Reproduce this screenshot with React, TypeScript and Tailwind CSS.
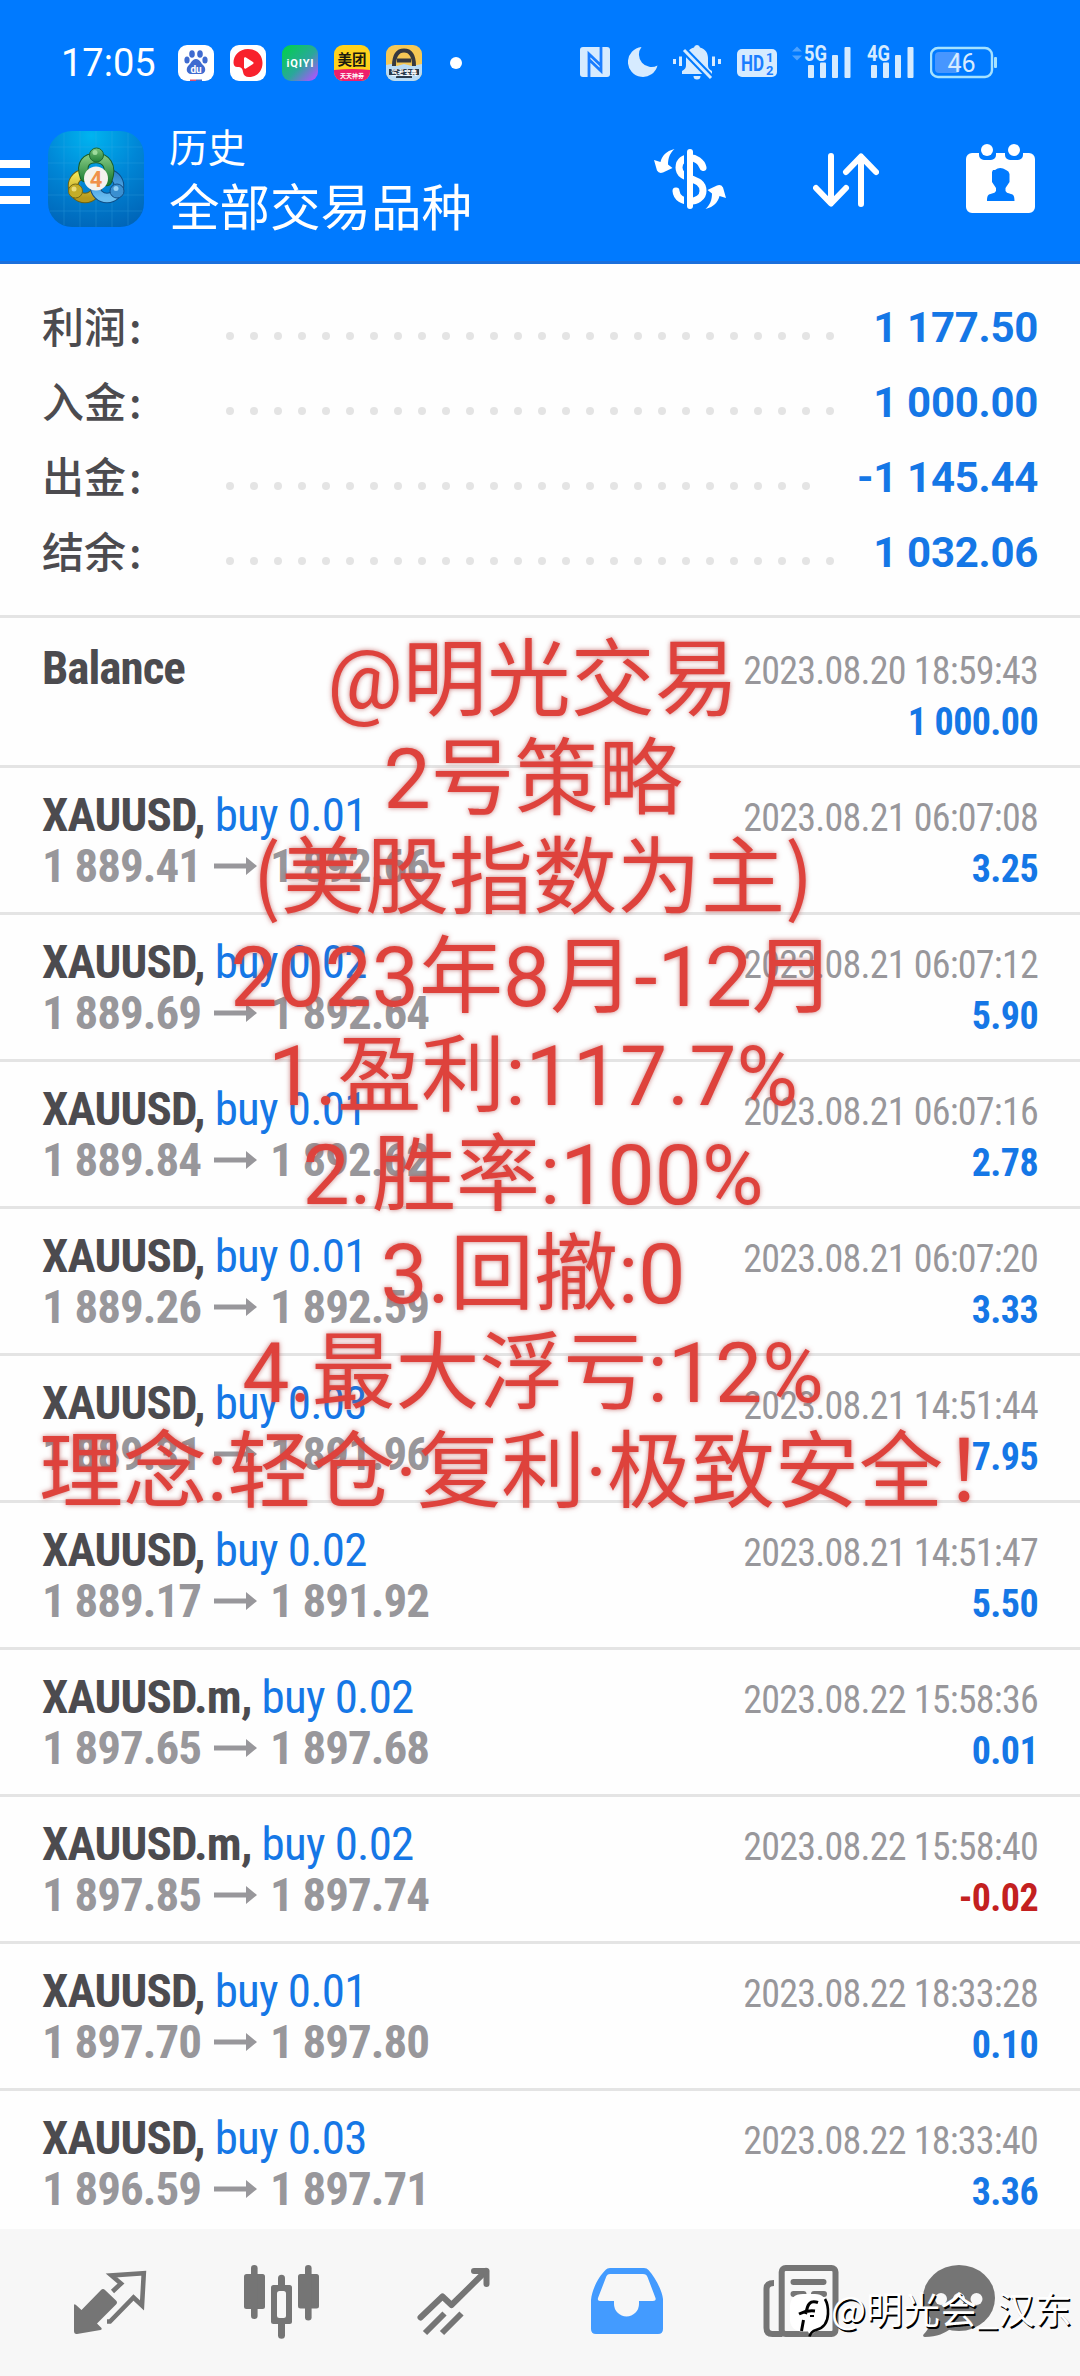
import { clsx } from 'clsx';

const summary = [
  { label: '利润', value: '1 177.50', dots: 26 },
  { label: '入金', value: '1 000.00', dots: 26 },
  { label: '出金', value: '-1 145.44', dots: 25 },
  { label: '结余', value: '1 032.06', dots: 26 },
];

const deals = [
  { symbol: 'XAUUSD', volume: '0.01', open: '1 889.41', close: '1 892.66', time: '2023.08.21 06:07:08', profit: '3.25' },
  { symbol: 'XAUUSD', volume: '0.02', open: '1 889.69', close: '1 892.64', time: '2023.08.21 06:07:12', profit: '5.90' },
  { symbol: 'XAUUSD', volume: '0.01', open: '1 889.84', close: '1 892.62', time: '2023.08.21 06:07:16', profit: '2.78' },
  { symbol: 'XAUUSD', volume: '0.01', open: '1 889.26', close: '1 892.59', time: '2023.08.21 06:07:20', profit: '3.33' },
  { symbol: 'XAUUSD', volume: '0.03', open: '1 889.31', close: '1 891.96', time: '2023.08.21 14:51:44', profit: '7.95' },
  { symbol: 'XAUUSD', volume: '0.02', open: '1 889.17', close: '1 891.92', time: '2023.08.21 14:51:47', profit: '5.50' },
  { symbol: 'XAUUSD.m', volume: '0.02', open: '1 897.65', close: '1 897.68', time: '2023.08.22 15:58:36', profit: '0.01' },
  { symbol: 'XAUUSD.m', volume: '0.02', open: '1 897.85', close: '1 897.74', time: '2023.08.22 15:58:40', profit: '-0.02' },
  { symbol: 'XAUUSD', volume: '0.01', open: '1 897.70', close: '1 897.80', time: '2023.08.22 18:33:28', profit: '0.10' },
  { symbol: 'XAUUSD', volume: '0.03', open: '1 896.59', close: '1 897.71', time: '2023.08.22 18:33:40', profit: '3.36' },
];

const notes = [
  '@明光交易',
  '2号策略',
  '(美股指数为主)',
  '2023年8月-12月',
  '1.盈利:117.7%',
  '2.胜率:100%',
  '3.回撤:0',
  '4.最大浮亏:12%',
  '理念:轻仓·复利·极致安全！',
];

function NotificationIcons() {
  return (
    <div className="flex items-center gap-4">
      <svg className="size-9" viewBox="0 0 36 36">
        <rect width="36" height="36" rx="9" fill="#fff" />
        <g fill="#3f6bd0">
          <ellipse cx="14" cy="9" rx="2.8" ry="3.8" />
          <ellipse cx="22" cy="9" rx="2.8" ry="3.8" />
          <ellipse cx="9" cy="15" rx="2.6" ry="3.5" />
          <ellipse cx="27" cy="15" rx="2.6" ry="3.5" />
          <path d="M18 14c-4 0-4.500 4-7.500 6.500C7.500 23.500 8.500 29 13 29h10c4.500 0 5.500-5.500 2.500-8.500C22.500 18 22 14 18 14z" />
        </g>
        <text x="18" y="27.500" fontSize="10" fontWeight="700" fill="#fff" textAnchor="middle">du</text>
        <rect x="12" y="34.500" width="6" height="1.500" fill="#e0506a" />
        <rect x="18" y="34.500" width="6" height="1.500" fill="#3f6bd0" />
      </svg>
      <svg className="size-9" viewBox="0 0 36 36">
        <rect width="36" height="36" rx="9" fill="#fff" />
        <path d="M18 4C9 4 3.500 10.500 3.500 17.500c0 2.500 1 4.500 4 4.500 4 0 5 1.500 5.500 5 .5 3.500 2.500 5 6 5C27 32 32.500 26 32.500 18S26.500 4 18 4z" fill="#f8212c" />
        <path d="M14 13.500v9c0 1 1 1.500 2 1l7-4.500c.8-.6.8-1.500 0-2l-7-4.500c-1-.5-2 0-2 1z" fill="#fff" />
      </svg>
      <svg className="size-9" viewBox="0 0 36 36">
        <defs>
          <linearGradient id="qy" x1="0" y1="0" x2="1" y2="1">
            <stop offset="0.1" stopColor="#06cc55" />
            <stop offset="0.55" stopColor="#2aa79b" />
            <stop offset="0.9" stopColor="#a15cf5" />
          </linearGradient>
        </defs>
        <rect width="36" height="36" rx="9" fill="url(#qy)" />
        <text x="18" y="22" fontSize="11" fontWeight="700" fill="#fff" textAnchor="middle" textLength="27">iQIYI</text>
      </svg>
      <svg className="size-9" viewBox="0 0 36 36">
        <defs>
          <clipPath id="mt"><rect width="36" height="36" rx="9" /></clipPath>
        </defs>
        <g clipPath="url(#mt)">
          <rect width="36" height="36" fill="#ffd21c" />
          <path d="M0 25q18-2 36 0v11H0z" fill="#ee1f6c" />
        </g>
        <text x="18" y="19.500" fontSize="14.500" fontWeight="700" fill="#1c1a10" textAnchor="middle">美团</text>
        <text x="18" y="32.500" fontSize="6" fontWeight="700" fill="#fff" textAnchor="middle">天天神券</text>
      </svg>
      <svg className="size-9" viewBox="0 0 36 36">
        <defs>
          <clipPath id="dr"><rect width="36" height="36" rx="9" /></clipPath>
        </defs>
        <g clipPath="url(#dr)">
          <rect width="36" height="36" fill="#f5c855" />
          <path d="M0 20l5-1 6 2 7-2 8 2 10-2v17H0z" fill="#b9dcf6" />
          <path d="M8 21C8 10 12 5.500 18 5.500S28 10 28 21M11 15.500h14" fill="none" stroke="#36393f" strokeWidth="4" />
          <rect x="3" y="24" width="30" height="6" fill="#2b3b4c" />
          <rect x="10" y="31" width="16" height="2" fill="#2b3b4c" />
        </g>
        <text x="18" y="29.500" fontSize="6.500" fontWeight="700" fill="#fff" textAnchor="middle">驾考宝典</text>
      </svg>
    </div>
  );
}

function SignalIcon({ label, className }: { label: string; className?: string }) {
  return (
    <svg className={clsx('h-[34px] w-[48px] overflow-visible', className)} viewBox="0 0 48 34" fill="#d6ebff">
      <text x="0" y="16" fontSize="22" fontWeight="700" textLength="23" lengthAdjust="spacingAndGlyphs">{label}</text>
      <rect x="4" y="20" width="6" height="13" rx="1" />
      <rect x="16" y="17.500" width="6" height="15.500" rx="1" />
      <rect x="28" y="10" width="6" height="23" rx="1" />
      <rect x="40.500" y="2" width="6" height="31" rx="1" />
    </svg>
  );
}

function StatusBar() {
  return (
    <div className="flex h-24 items-start px-[61px] pt-[45px] font-['Roboto','Noto_Sans_CJK_SC',sans-serif] text-[#d6ebff]">
      <span className="w-[117px] text-[38px] leading-9 text-white">17:05</span>
      <NotificationIcons />
      <span className="mt-3 ml-[28px] size-3 rounded-full bg-white" />
      <svg className="ml-[118px] h-[34px] w-[30px]" viewBox="0 0 30 34">
        <rect y="2" width="30" height="30" rx="3" fill="#d6ebff" />
        <path d="M9 32V9l12 11.500M21 2v24L9 14.500" fill="none" stroke="#1a7dff" strokeWidth="2.800" />
      </svg>
      <svg className="ml-[18px] h-[34px] w-[30px]" viewBox="0 0 30 34" fill="#d6ebff">
        <path d="M13.500 2A15 15 0 1 0 29.500 20.500 12.500 12.500 0 0 1 13.500 2z" />
      </svg>
      <svg className="ml-[15px] h-[36px] w-[48px]" viewBox="0 0 48 36" fill="#d6ebff">
        <path d="M24 0a3 3 0 0 0-3 2.500C15 4 13 9 13 13v7c0 3-1 4-4 6v3h30v-3c-3-2-4-3-4-6v-7c0-4-2-9-8-10.500A3 3 0 0 0 24 0z" />
        <path d="M20.500 31h7a3.500 3.500 0 0 1-7 0z" />
        <path d="M9 3l30 31" stroke="#007aff" strokeWidth="7" />
        <path d="M11 5l27 28" stroke="#d6ebff" strokeWidth="3" />
        <rect x="0" y="14" width="3" height="5" />
        <rect x="6" y="11.500" width="3" height="9.500" />
        <rect x="39" y="11.500" width="3" height="9.500" />
        <rect x="45" y="14" width="3" height="5" />
      </svg>
      <svg className="ml-4 h-[34px] w-[40px]" viewBox="0 0 40 34">
        <rect y="4" width="40" height="28" rx="5" fill="#d6ebff" />
        <g fill="#1a7dff" fontWeight="700">
          <text x="4" y="26" fontSize="22" textLength="23" lengthAdjust="spacingAndGlyphs">HD</text>
          <text x="29" y="17" fontSize="13">1</text>
          <text x="29" y="29.500" fontSize="13">2</text>
        </g>
      </svg>
      <svg className="ml-[14px] h-[34px] w-[12px]" viewBox="0 0 12 34" fill="#4da2ff">
        <path d="M1 6.500l5-5 5 5zM1 10.500l5 5 5-5z" />
      </svg>
      <SignalIcon label="5G" className="ml-px" />
      <SignalIcon label="4G" className="ml-[15px]" />
      <svg className="ml-[15px] h-[34px] w-[68px]" viewBox="0 0 68 34">
        <rect x="1" y="3" width="61" height="29" rx="7" fill="none" stroke="#a5e2ff" strokeWidth="2.400" />
        <rect x="5" y="7" width="25" height="21" rx="4" fill="#4796ff" />
        <rect x="64" y="12" width="3" height="11" rx="1" fill="#a5e2ff" />
        <text x="31.500" y="26.500" fontSize="25" fill="#d6ebff" textAnchor="middle">46</text>
      </svg>
    </div>
  );
}

function AppLogo() {
  return (
    <svg className="ml-[18px] size-24" viewBox="0 0 96 96">
      <defs>
        <radialGradient id="sky" cx="0.45" cy="0.05" r="1">
          <stop offset="0" stopColor="#00b4f0" />
          <stop offset="0.5" stopColor="#0086d6" />
          <stop offset="1" stopColor="#0065b8" />
        </radialGradient>
        <linearGradient id="green" x1="0" y1="0" x2="0" y2="1">
          <stop offset="0" stopColor="#7cc47c" />
          <stop offset="1" stopColor="#1f7f36" />
        </linearGradient>
        <linearGradient id="yellow" x1="0" y1="0" x2="0" y2="1">
          <stop offset="0" stopColor="#f3e455" />
          <stop offset="1" stopColor="#b79a1e" />
        </linearGradient>
        <linearGradient id="blue" x1="0" y1="0" x2="0" y2="1">
          <stop offset="0" stopColor="#2f86cf" />
          <stop offset="1" stopColor="#69bdf0" />
        </linearGradient>
      </defs>
      <rect width="96" height="96" rx="24" fill="url(#sky)" />
      <path d="M16 2v92M32 0v96M48 0v96M64 0v96M80 2v92M2 16h92M0 32h96M0 48h96M0 64h96M2 80h92" stroke="#4cb4ea" strokeWidth="0.600" opacity="0.400" />
      <g fill="none" strokeLinecap="round">
        <circle cx="37" cy="55" r="12" stroke="#6b6212" strokeWidth="10.500" />
        <circle cx="37" cy="55" r="12" stroke="url(#yellow)" strokeWidth="8.500" />
        <circle cx="59" cy="55" r="12" stroke="#0d4d86" strokeWidth="10.500" />
        <circle cx="59" cy="55" r="12" stroke="url(#blue)" strokeWidth="8.500" />
        <path d="M37 46C32 32 39 27 48 27S65 34 59 50" stroke="#175c28" strokeWidth="10.500" />
        <path d="M37 46C32 32 39 27 48 27S65 34 59 50" stroke="url(#green)" strokeWidth="8.500" />
      </g>
      <circle cx="48.500" cy="24" r="7" fill="url(#green)" stroke="#1c6630" />
      <circle cx="27.500" cy="60" r="7" fill="#c4ad28" stroke="#756a14" />
      <circle cx="69" cy="60" r="7" fill="#3a8fd0" stroke="#124f88" />
      <circle cx="26" cy="58" r="2.500" fill="#eadb78" />
      <circle cx="68" cy="57.500" r="2.500" fill="#93d0f5" />
      <circle cx="47" cy="21.500" r="2.500" fill="#9ddb9c" />
      <circle cx="48" cy="47.500" r="12" fill="#f4f2ee" />
      <text x="48" y="55.500" fontSize="22" fontWeight="700" fill="#f0914a" textAnchor="middle" fontFamily="Roboto">4</text>
    </svg>
  );
}

function Toolbar() {
  return (
    <div className="flex h-[165px] items-center">
      <div className="mt-[7px] flex w-[30px] flex-col gap-2.5">
        <span className="h-2 bg-white" />
        <span className="h-2 bg-white" />
        <span className="h-2 bg-white" />
      </div>
      <AppLogo />
      <div className="ml-[25px] flex w-[485px] flex-col pb-[6px] font-['Noto_Sans_CJK_SC',sans-serif] text-white">
        <span className="text-[38.5px] leading-[56px]">历史</span>
        <h1 className="text-[50.5px] leading-[62px]">全部交易品种</h1>
      </div>
      <svg className="h-[60px] w-[72px]" viewBox="0 0 72 60" fill="#fff">
        <path d="M49 18.500C46 6 25 5 25 18.500c0 14 24 8 24 23.500 0 13.500-26 14-27 0" fill="none" stroke="#fff" strokeWidth="7" strokeLinecap="round" />
        <rect x="30" y="0" width="4" height="60" fill="#007aff" />
        <rect x="33" y="0" width="6" height="60" rx="3" />
        <path d="M20.500 0C12 2 8 7 6.500 13L0 11l3 10.500q2 3.500 6 2L18.500 19 14 15.500C14 9 16 4 20.500 0z" />
        <path d="M20.500 0C12 2 8 7 6.500 13L0 11l3 10.500q2 3.500 6 2L18.500 19 14 15.500C14 9 16 4 20.500 0z" transform="rotate(180 36 30)" />
      </svg>
      <svg className="mt-[3px] ml-[87px] h-14 w-[66px]" viewBox="0 0 66 56" fill="none" stroke="#fff" strokeWidth="6" strokeLinecap="round" strokeLinejoin="round">
        <path d="M18 4v47M3 36l15 15.500L33 36M48 52V5M33 20L48 4.500 63 20" />
      </svg>
      <svg className="ml-[87px] size-[69px]" viewBox="0 0 69 69">
        <path d="M6 9h7v2a5 5 0 0 0 5 5h7a5 5 0 0 0 5-5V9h9v2a5 5 0 0 0 5 5h8a5 5 0 0 0 5-5V9h6a6 6 0 0 1 6 6v48a6 6 0 0 1-6 6H6a6 6 0 0 1-6-6V15a6 6 0 0 1 6-6z" fill="#fff" />
        <circle cx="21" cy="6" r="6" fill="#fff" />
        <circle cx="48" cy="6" r="6" fill="#fff" />
        <path d="M26 28l1-2h2q5-4 11 0 3 1 3.500 4v8l-2 3-2 3v3q1 2 4 2.500c4 1 5 2 5 7.500H21c0-5.500 1-6.500 5-7.500q3-.5 4-2.500v-3l-2-3-2-3z" fill="#007aff" />
      </svg>
    </div>
  );
}

function Summary() {
  return (
    <section className="border-b-[3px] border-[#e4e4e4] pt-[26px] pb-[25px]">
      {summary.map((row) => (
        <div key={row.label} className="flex h-[75px] items-center pr-[42px] pl-[42px]">
          <span className="w-[184px] pb-[7px] font-['Noto_Sans_CJK_SC',sans-serif] text-[42px] leading-[67px] font-medium text-[#4c4b4f]">
            {row.label}
            <span className="ml-[3px]">:</span>
          </span>
          <div className="mt-4 flex grow gap-4">
            {Array.from({ length: row.dots }, (_, i) => (
              <span key={i} className="size-2 shrink-0 rounded-full bg-[#e4e4e4]" />
            ))}
          </div>
          <span className="text-[42px] leading-[75px] font-bold tracking-[-0.3px] whitespace-nowrap text-[#1577e6]">{row.value}</span>
        </div>
      ))}
    </section>
  );
}

function ArrowIcon() {
  return (
    <svg className="ml-[13px] mr-[13px] h-[18px] w-[43px]" viewBox="0 0 43 18" fill="#98979b">
      <path d="M0 6.500h32V0l11 9-11 9v-6.500H0z" />
    </svg>
  );
}

function DealRow({ symbol, volume, open, close, time, profit }: (typeof deals)[number]) {
  return (
    <li className="flex h-[147px] shrink-0 justify-between border-b-[3px] border-[#e4e4e4] px-[42px] pt-[21px] leading-[51px] font-stretch-condensed">
      <div className="text-[47px] tracking-[-0.8px]">
        <p>
          <span className="font-bold text-[#4c4b4f]">{symbol},</span> <span className="text-[#1577e6]">buy {volume}</span>
        </p>
        <p className="flex items-center font-bold tracking-[-1px] text-[#98979b]">
          {open}
          <ArrowIcon />
          {close}
        </p>
      </div>
      <div className="pt-1 text-right text-[38px] tracking-[-0.6px]">
        <p className="tracking-[-0.75px] text-[#98979b]">{time}</p>
        <p className={clsx('font-bold', profit.startsWith('-') ? 'text-[#c3201f]' : 'text-[#1577e6]')}>{profit}</p>
      </div>
    </li>
  );
}

function DealList() {
  return (
    <ul className="flex min-h-0 grow flex-col overflow-hidden">
      <li className="flex h-[150px] shrink-0 justify-between border-b-[3px] border-[#e4e4e4] px-[42px] pt-6 leading-[51px] font-stretch-condensed">
        <p className="text-[47px] font-bold tracking-[-1px] text-[#4c4b4f]">Balance</p>
        <div className="pt-1 text-right text-[38px] tracking-[-0.6px]">
          <p className="tracking-[-0.75px] text-[#98979b]">2023.08.20 18:59:43</p>
          <p className="font-bold text-[#1577e6]">1 000.00</p>
        </div>
      </li>
      {deals.map((deal) => (
        <DealRow key={deal.time} {...deal} />
      ))}
    </ul>
  );
}

function BottomNav() {
  return (
    <nav className="flex h-[147px] shrink-0 items-start bg-[#f7f7f7] text-[#757575]">
      <svg className="mt-[39px] ml-[72px] h-[68px] w-[76px]" viewBox="0 0 76 68" fill="currentColor">
        <path d="M2 37.500q0-2 2-.5l5.500 5L29 22q2-2 4 0l11 10.500q2 2 0 4L25 55.500l4.500 4.500q1 1.500-1 2L5 66q-3 .3-3-3z" />
        <path d="M40.500 23.500l8.500-8-9.500-8 32.300-2.300L70 37.500l-8.500-8L38 53.500h-3" fill="none" stroke="currentColor" strokeWidth="4.600" />
      </svg>
      <svg className="mt-[34px] ml-[94px] h-[78px] w-[80px]" viewBox="0 0 80 78" fill="currentColor">
        <rect x="2" y="11" width="21" height="35" rx="2.500" />
        <rect x="9" y="2" width="6.600" height="54" rx="3.300" />
        <rect x="56" y="11" width="21" height="34.500" rx="2.500" />
        <rect x="63" y="2" width="6.600" height="55.500" rx="3.300" />
        <rect x="36" y="11.700" width="7" height="64" rx="3.500" />
        <rect x="29" y="22" width="21" height="39" rx="2.500" />
        <rect x="35" y="28" width="9" height="27" rx="2.500" fill="#f7f7f7" />
      </svg>
      <svg className="mt-[37px] ml-[94px] h-[70px] w-[76px]" viewBox="0 0 76 70" fill="none" stroke="currentColor" strokeWidth="6">
        <path d="M4.500 51.500l22-21 9 8.500L70 5" strokeLinecap="round" strokeLinejoin="round" />
        <path d="M58 5h12.500v13" strokeLinecap="round" strokeLinejoin="round" />
        <path d="M9 67l19.500-19.500M26 67l19.500-19.500" />
      </svg>
      <svg className="mt-[39px] ml-[99px] h-[66px] w-[72px]" viewBox="0 0 72 66" fill="#439bff" fillRule="evenodd">
        <path d="M15 1.500Q16 0 19 0h34q3 0 4.500 2C64 9 71 22 72 31v30q0 5-5 5H5q-5 0-5-5V32C1 21 8 8 15 1.500zM19 6q-2.500 0-3.500 2L7 30q-.8 3 2 3h14v3a12.500 12.500 0 0 0 25 0v-3h14q3.500 0 2.500-3L56.500 9q-1-3-4.500-3z" />
      </svg>
      <svg className="mt-[34px] ml-[99px] h-[76px] w-[78px]" viewBox="0 0 78 76" fill="none" stroke="currentColor" strokeWidth="6">
        <rect x="19.700" y="5" width="53.800" height="66" rx="4" />
        <path d="M12 20q-7.500 0-7.500 6v39q0 6 6 6h10" />
        <path d="M31.500 19h30M31.500 31h10M52 31h10" strokeLinecap="round" />
      </svg>
      <svg className="mt-[34px] ml-[82px] h-[76px] w-[76px]" viewBox="0 0 76 76" fill="currentColor">
        <ellipse cx="37" cy="35" rx="36" ry="33" />
        <path d="M8 52c2 9-2 15-6.500 19.500-1 1.500 0 2.500 1.500 2.500 12 0 20-4 27-9z" />
        <g fill="#f7f7f7">
          <circle cx="19" cy="36" r="6" />
          <circle cx="37" cy="36" r="6" />
          <circle cx="54.500" cy="36" r="6" />
        </g>
      </svg>
    </nav>
  );
}

function Watermark() {
  return (
    <div className="absolute top-[2282px] left-[790px] flex items-start">
      <svg className="mt-3 h-[44px] w-[40px]" viewBox="0 0 40 44">
        <path d="M13 0h12q11 0 11.500 12v12q0 9-8 11.500Q24 38 20 42l-2-4.500h-5Q0 37 0 25V13Q0 0 13 0z" fill="#fff" />
        <path d="M35 5q3.500 6 3 15-.5 13-12 16-5 1.500-6.500 6.500" fill="none" stroke="#000" strokeWidth="2.600" />
        <path d="M28 8.500q-8-3-10.500 4.500M9 20q8-4 16-3M17.500 13l-2 7M13.500 26l-2 11" fill="none" stroke="#000" strokeWidth="3" />
        <path d="M20 22h4" stroke="#000" strokeWidth="2" />
      </svg>
      <span className="ml-px font-['Noto_Sans_CJK_SC',sans-serif] text-[37px] leading-[52px] whitespace-nowrap text-white [text-shadow:1.5px_1.5px_0.5px_#000]">
        @明光会_汉东
      </span>
    </div>
  );
}

export default function App() {
  return (
    <div className="relative flex h-[2376px] w-[1080px] flex-col overflow-hidden bg-[#fefefe] font-['Roboto','Noto_Sans_CJK_SC',sans-serif]">
      <header className="shrink-0 border-b-[3px] border-[#1a6fdc] bg-[#007aff]">
        <StatusBar />
        <Toolbar />
      </header>
      <Summary />
      <DealList />
      <BottomNav />
      <div className="absolute top-[631px] left-0 flex w-[1066px] flex-col items-center text-[84px] leading-[99px] whitespace-nowrap text-[#de423c] [text-shadow:0_0_5px_#b44646b0]">
        {notes.map((line) => (
          <p key={line} className={clsx(line.startsWith('(') && "-mt-2 mb-2 font-['Noto_Sans_CJK_SC',sans-serif]")}>
            {line}
          </p>
        ))}
      </div>
      <Watermark />
    </div>
  );
}
